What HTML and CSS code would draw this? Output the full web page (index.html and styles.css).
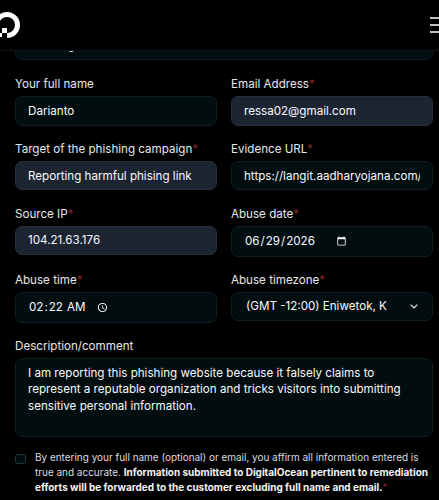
FILE: index.html
```html
<!DOCTYPE html>
<html lang="en">
<head>
<meta charset="utf-8">
<title>Report abuse</title>
<link rel="stylesheet" href="styles.css">
</head>
<body>
<header class="topbar">
  <svg class="logo" width="26" height="26" viewBox="0 0 26 26" aria-hidden="true">
    <path d="M13 23.5A10.5 10.5 0 1 0 2.5 13" fill="none" stroke="#fff" stroke-width="5"/>
    <rect x="8" y="16" width="5" height="5" fill="#fff"/>
    <rect x="4" y="21" width="4" height="4" fill="#fff"/>
  </svg>
  <svg class="menu" width="18" height="18" viewBox="0 0 18 18" aria-hidden="true">
    <path d="M0 2h18M0 9h18M0 16h18" stroke="#fff" stroke-width="1.7"/>
  </svg>
</header>
<main class="page">
  <div class="clipped">
    <input class="field" type="text" value="Phishing" aria-label="Abuse type">
  </div>
  <form class="form">
    <div class="group">
      <label class="label" for="name">Your full name</label>
      <input class="field" id="name" type="text" value="Darianto">
    </div>
    <div class="group">
      <label class="label" for="email">Email Address<span class="req">*</span></label>
      <input class="field filled" id="email" type="text" value="ressa02@gmail.com">
    </div>
    <div class="group">
      <label class="label" for="target">Target of the phishing campaign<span class="req">*</span></label>
      <input class="field filled" id="target" type="text" value="Reporting harmful phising link">
    </div>
    <div class="group">
      <label class="label" for="url">Evidence URL<span class="req">*</span></label>
      <input class="field" id="url" type="text" value="https://langit.aadharyojana.com/">
    </div>
    <div class="group">
      <label class="label" for="ip">Source IP<span class="req">*</span></label>
      <input class="field filled" id="ip" type="text" value="104.21.63.176">
    </div>
    <div class="group">
      <label class="label" for="date">Abuse date<span class="req">*</span></label>
      <input class="field picker date" id="date" type="date" value="2026-06-29">
    </div>
    <div class="group">
      <label class="label" for="time">Abuse time<span class="req">*</span></label>
      <input class="field picker time" id="time" type="time" value="02:22">
    </div>
    <div class="group">
      <label class="label" for="tz">Abuse timezone<span class="req">*</span></label>
      <div class="select-wrap">
        <select class="field select" id="tz">
          <option>(GMT -12:00) Eniwetok, Kwajalein</option>
        </select>
        <svg class="chevron" width="8" height="5" viewBox="0 0 8 5" aria-hidden="true">
          <path d="M.7.7L4 4 7.3.7" fill="none" stroke="#e5e7eb" stroke-width="1.2"/>
        </svg>
      </div>
    </div>
    <div class="group wide">
      <label class="label" for="desc">Description/comment</label>
      <textarea class="field area" id="desc" rows="4">I am reporting this phishing website because it falsely claims to represent a reputable organization and tricks visitors into submitting sensitive personal information.</textarea>
    </div>
    <div class="consent wide">
      <input class="check" id="agree" type="checkbox">
      <label class="terms" for="agree">By entering your full name (optional) or email, you affirm all information entered is true and accurate. <strong>Information submitted to DigitalOcean pertinent to remediation efforts will be forwarded to the customer excluding full name and email.</strong><span class="req">*</span></label>
    </div>
  </form>
</main>
</body>
</html>
```
FILE: styles.css
```css
* { box-sizing: border-box; }
html, body { margin: 0; height: 500px; overflow: hidden; }
body {
  background: #000;
  color: #e5e7eb;
  font-family: Inter, "Liberation Sans", sans-serif;
  color-scheme: dark;
}
.topbar {
  height: 51px;
  display: flex;
  align-items: center;
  justify-content: space-between;
  background: #000;
  border-bottom: 1px solid #0c1416;
}
.logo { margin-left: -6px; }
.menu { margin-right: -9px; }
.page { padding: 0 6px 0 15px; }
.clipped {
  height: 9px;
  overflow: hidden;
  display: flex;
  align-items: flex-end;
}
.form {
  display: grid;
  grid-template-columns: 202px 202px;
  column-gap: 14px;
  row-gap: 15.25px;
  margin-top: 16px;
}
.group { display: flex; flex-direction: column; min-width: 0; }
.wide { grid-column: 1 / -1; }
.label {
  font-size: 11.62px;
  line-height: 17px;
  margin-bottom: 3px;
  color: #e5e7eb;
}
.req { color: #7f2a1d; }
.field {
  display: block;
  flex: none;
  width: 100%;
  height: 29.5px;
  padding: 0 12px;
  background: #020d10;
  border: 1px solid #0e1f22;
  border-radius: 7px;
  color: #f9fafb;
  font: 11.62px/17px Inter, "Liberation Sans", sans-serif;
  outline: none;
}
.filled { background: #1c2331; border-color: #252d3b; }
.picker { height: 31px; }
.picker::-webkit-datetime-edit { flex: 0 0 auto; }
.picker::-webkit-calendar-picker-indicator {
  width: 11px;
  height: 11px;
  padding: 0;
}
.date::-webkit-calendar-picker-indicator { margin-left: 1px; }
.time::-webkit-calendar-picker-indicator { margin-left: 10px; }
.select-wrap { position: relative; }
.select { appearance: none; padding: 0 45px 0 14px; }
.chevron { position: absolute; right: 15.5px; top: 12px; }
.area {
  height: 79px;
  padding: 5.5px 12px;
  line-height: 16.6px;
  resize: none;
  overflow: hidden;
}
.consent { display: flex; gap: 9.5px; margin-top: -2px; }
.check {
  appearance: none;
  flex: none;
  width: 10.5px;
  height: 10.5px;
  margin: 3.5px 0 0;
  background: #020d10;
  border: 1px solid #1b3a3d;
  border-radius: 3px;
}
.terms {
  font-size: 9.96px;
  line-height: 15px;
  color: #dadde1;
}
.terms strong { font-weight: 700; color: #f3f4f6; }
```
